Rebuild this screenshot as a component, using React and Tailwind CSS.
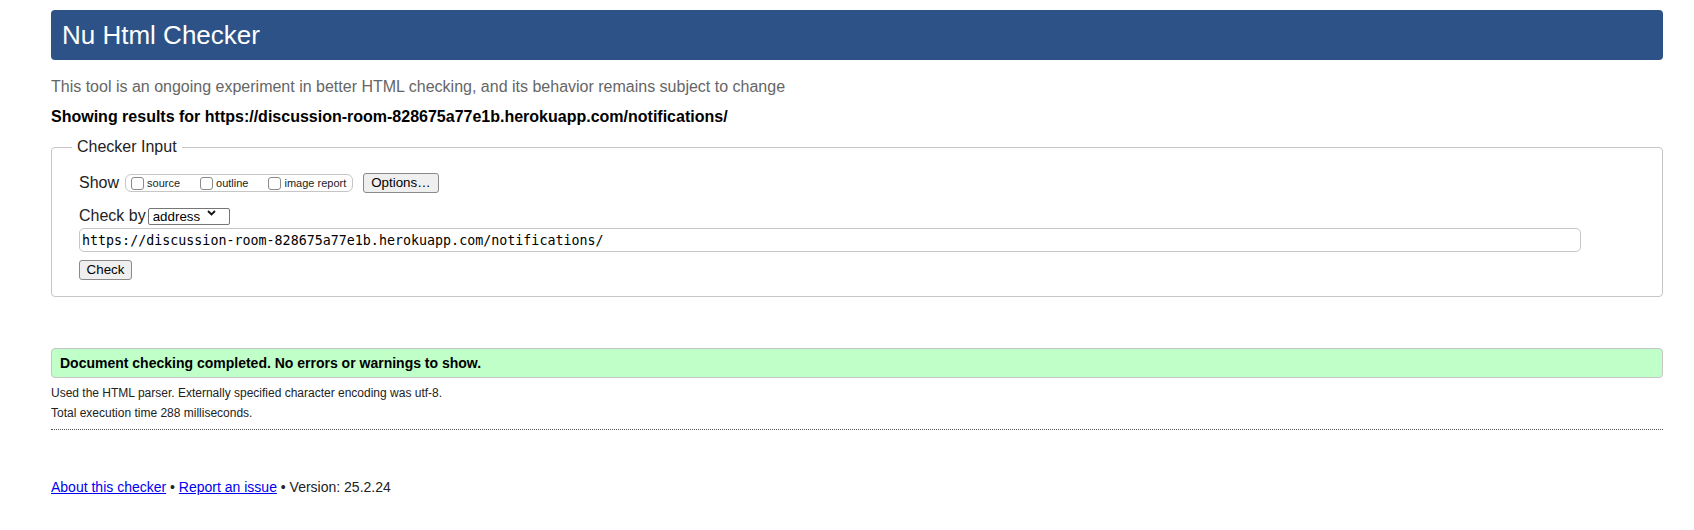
import React from "react";

function Box(props) {
    return (
        <label className="flex items-center">
            <input type="checkbox" className="ml-0 h-[13px] w-[13px] appearance-none rounded-[3px] border border-[#8a8a8a] bg-white" />
            <span className={"ml-[3px] text-[11px] leading-[14px] " + props.gap}>{props.label}</span>
        </label>
    );
}

export default function App() {
    return (
        <div className="min-h-[530px] bg-white pl-[51px] pr-[31px] pt-[10px] font-['Liberation_Sans',Arial,sans-serif] text-[#222]">
            <h1 className="flex h-[50px] items-center rounded-[4px] bg-[#2d5288] px-[11px] text-[26px] font-normal text-white">Nu Html Checker</h1>

            <p className="mt-[17px] text-[16px] leading-[20px] text-[#666]">This tool is an ongoing experiment in better HTML checking, and its behavior remains subject to change</p>
            <p className="mt-[10px] text-[16px] font-bold leading-[20px] text-black">Showing results for https://discussion-room-828675a77e1b.herokuapp.com/notifications/</p>

            <fieldset className="mt-[10px] rounded-[4px] border border-[#c6c6c6] pb-[16px] pl-[20px] pr-[20px]">
                <legend className="px-[5px] text-[16px] leading-[20px]">Checker Input</legend>

                <div className="pl-[7px]">
                    <div className="mt-[16px] flex h-[20px] items-center">
                        <span className="mr-[6px] text-[16px] leading-[20px]">Show</span>
                        <div className="flex h-[18px] items-center rounded-[6px] border border-[#c6c6c6] pl-[5px] pr-[6px]">
                            <Box label="source" gap="mr-[20px]" />
                            <Box label="outline" gap="mr-[20px]" />
                            <Box label="image report" gap="" />
                        </div>
                        <button className="ml-[10px] h-[20px] rounded-[3px] border border-[#8a8a8a] bg-[#efefef] px-[7px] text-[13.33px] leading-[18px] text-black">Options…</button>
                    </div>

                    <div className="mt-[13px] flex h-[20px] items-center">
                        <span className="text-[16px] leading-[20px]">Check by</span>
                        <div className="relative ml-[2px]">
                            <select className="h-[17px] w-[82px] appearance-none rounded-[2px] border border-[#767676] bg-white pl-[4px] text-[13.33px] leading-[15px] text-black">
                                <option>address</option>
                            </select>
                            <svg className="pointer-events-none absolute right-[14px] top-[6px]" width="9" height="6" viewBox="0 0 9 6">
                                <path d="M1 1 L4.5 4.5 L8 1" fill="none" stroke="#111" strokeWidth="1.8" />
                            </svg>
                        </div>
                    </div>

                    <input
                        type="text"
                        readOnly
                        value="https://discussion-room-828675a77e1b.herokuapp.com/notifications/"
                        className="mt-[2px] block h-[24px] w-[1502px] rounded-[5px] border border-[#c6c6c6] pl-[2px] font-['DejaVu_Sans_Mono',monospace] text-[13.33px] text-black outline-none"
                    />

                    <button className="mt-[8px] block h-[20px] w-[53px] rounded-[3px] border border-[#8a8a8a] bg-[#efefef] text-[13.33px] leading-[18px] text-black">Check</button>
                </div>
            </fieldset>

            <div className="mt-[51px] flex h-[30px] items-center rounded-[4px] border border-[#c6c6c6] bg-[#c0ffc8] px-[8px] text-[14px] font-bold text-black">
                Document checking completed. No errors or warnings to show.
            </div>

            <p className="mt-[5px] text-[12px] leading-[20px]">Used the HTML parser. Externally specified character encoding was utf-8.</p>
            <p className="text-[12px] leading-[20px]">Total execution time 288 milliseconds.</p>

            <div className="mt-[6px] border-t border-dotted border-[#555]"></div>

            <p className="mt-[47px] text-[14px] leading-[20px]">
                <a href="#" className="text-[#0000ee] underline">About this checker</a> • <a href="#" className="text-[#0000ee] underline">Report an issue</a> • Version: 25.2.24
            </p>
        </div>
    );
}
